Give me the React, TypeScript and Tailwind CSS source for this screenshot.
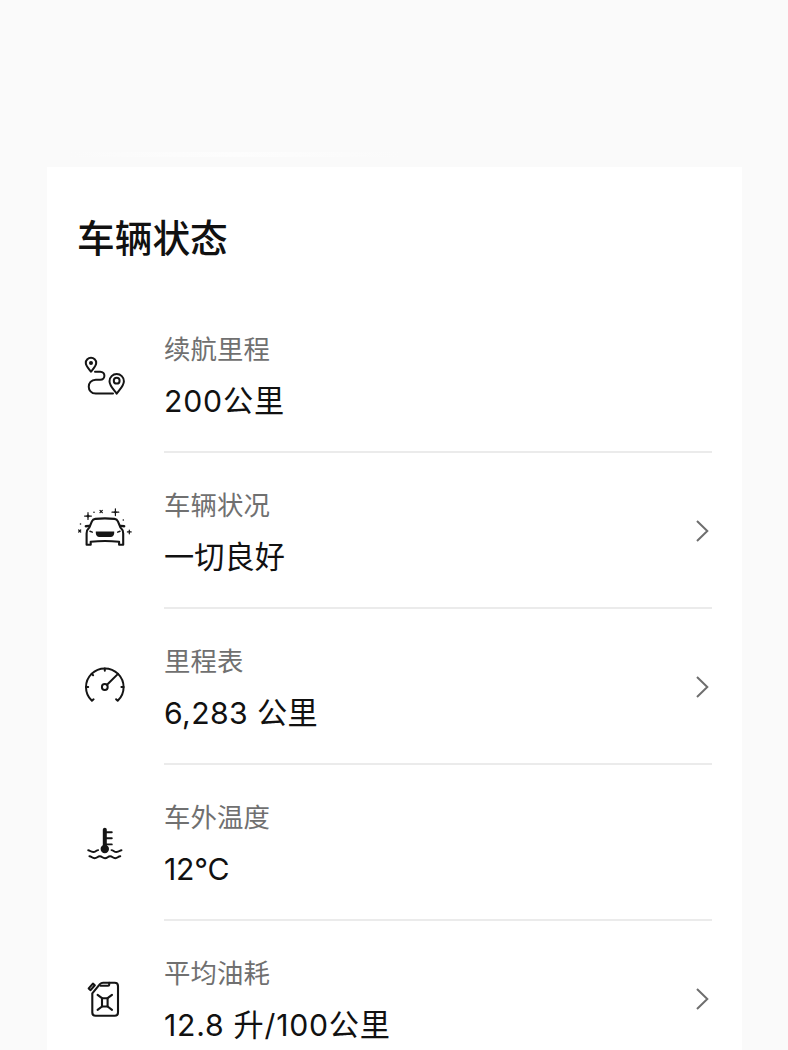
import { ReactNode } from "react";

interface StatusItem {
  label: string;
  value: string;
  icon: ReactNode;
  tracking: string;
  clickable?: boolean;
}

const iconClass = "mt-12 h-[60px] w-[54px] shrink-0 text-[#151515]";

function RouteIcon() {
  return (
    <svg
      viewBox="8 0 54 60"
      className={iconClass}
      fill="none"
      stroke="currentColor"
      strokeWidth="2"
      strokeLinecap="round"
      strokeLinejoin="round"
    >
      <path d="M21 26.800c-2.100-3-5.200-6-5.200-8.900a5.200 5.200 0 0 1 10.400 0c0 2.900-3.100 5.900-5.200 8.900z" />
      <circle cx="21" cy="18" r="2" fill="currentColor" stroke="none" />
      <path d="M46.700 48.700c-2.700-3.900-7.200-7.900-7.200-12.500a7.200 7.200 0 0 1 14.400 0c0 4.600-4.500 8.600-7.200 12.500z" />
      <circle cx="46.700" cy="35.700" r="2.900" />
      <path d="M25 26.700h5.200c5.600 0 5.600 8 0 8h-4.400c-9.400 0-9.400 13.900 0 13.900H43" />
    </svg>
  );
}

function CarIcon() {
  return (
    <svg
      viewBox="8 1 54 60"
      className={iconClass}
      fill="none"
      stroke="currentColor"
      strokeWidth="2.100"
      strokeLinecap="round"
      strokeLinejoin="round"
    >
      <path d="M19.300 27.500l2.600-6.100c.7-1.700 1.700-2.300 3.400-2.500 6.500-.7 12.700-.7 19.200 0 1.700.2 2.700.8 3.400 2.500l2.600 6.100c1.900 1.700 2.700 3.500 2.700 6v11.200h-4.100v-3c-9.300-.9-19.100-.9-28.400 0v3h-4.100V33.500c0-2.500.8-4.300 2.700-6z" />
      <path d="M15.800 26.200l3.500-.3M54.200 26.200l-3.500-.3" strokeWidth="2.400" />
      <path d="M20 31.200l2.300.9M50 31.200l-2.300.9" strokeWidth="1.500" />
      <path
        d="M25.800 31.400h18.400v1.500c0 2.200-1.300 4-3.600 4H29.400c-2.300 0-3.600-1.800-3.600-4z"
        fill="currentColor"
        stroke="none"
      />
      <path
        d="M18 12.700v6.800M14.600 16.100h6.800M45.400 8.800v6.800M42 12.200h6.800M59.300 30v3.800M57.400 31.900h3.800"
        strokeWidth="1.200"
      />
      <path
        d="M18 14q.4 1.700 2.100 2.100-1.700.4-2.100 2.100-.4-1.700-2.100-2.100 1.700-.4 2.100-2.100z M45.400 10.100q.4 1.700 2.100 2.100-1.700.4-2.100 2.100-.4-1.700-2.100-2.100 1.700-.4 2.100-2.100z"
        fill="currentColor"
        stroke="none"
      />
      <path
        d="M30 10.400l2.300 2.300m0-2.300l-2.300 2.300M8.700 30l2 2m0-2l-2 2"
        strokeWidth="1.200"
      />
      <g fill="currentColor" stroke="none">
        <circle cx="24" cy="12.300" r="0.800" />
        <circle cx="10.500" cy="24" r="0.800" />
        <circle cx="53.300" cy="20" r="0.800" />
      </g>
    </svg>
  );
}

function GaugeIcon() {
  return (
    <svg
      viewBox="8 2 54 60"
      className={iconClass}
      fill="none"
      stroke="currentColor"
      strokeWidth="2"
      strokeLinecap="round"
      strokeLinejoin="round"
    >
      <path d="M23.600 44.300l-1.700 1.500C18.300 42.300 16 37.500 16 32.200a18.800 18.800 0 0 1 37.600 0c0 5.300-2.200 10.100-5.900 13.600l-1.600-1.500" />
      <path d="M34.800 13.500v2.200M16 32h2.200M51.400 32h2.200M21.700 18.900l1.400 1.400" />
      <circle cx="34.800" cy="32" r="2.900" />
      <path d="M37 29.800l11-10.900" />
    </svg>
  );
}

function ThermometerIcon() {
  return (
    <svg
      viewBox="8 -2 54 60"
      className={iconClass}
      fill="none"
      stroke="currentColor"
      strokeWidth="1.900"
      strokeLinecap="round"
      strokeLinejoin="round"
    >
      <path d="M34.800 14.700v18" strokeWidth="4" />
      <circle cx="34.800" cy="34" r="4.200" fill="currentColor" stroke="none" />
      <path d="M36 17.200h5.800M36 23.300h5.800M36 29.400h5.800" />
      <path d="M18.200 35.300c2 0 2 1.700 5 1.700 2.600 0 3-1.900 5-1.900M41.500 35.100c2 0 2.300 1.900 5 1.900 2.900 0 3-1.700 5-1.700" />
      <path d="M19.400 41.300c2.500 0 2.500 1.900 5.200 1.900s2.700-1.900 5.200-1.900 2.500 1.900 5.200 1.900 2.600-1.900 5.100-1.900 2.600 1.900 5.200 1.900 2.500-1.900 5-1.900" />
    </svg>
  );
}

function FuelIcon() {
  return (
    <svg
      viewBox="8 -1 54 60"
      className={iconClass}
      fill="none"
      stroke="currentColor"
      strokeWidth="2.100"
      strokeLinecap="round"
      strokeLinejoin="round"
    >
      <path d="M22.300 23.300l7.600-9.200c1-1.100 1.800-1.400 3.200-1.400h11.600c2 0 3.300 1.300 3.300 3.300v26.500c0 2-1.300 3.300-3.300 3.300H25.600c-2 0-3.300-1.300-3.300-3.300z" />
      <path d="M30.500 15.800h7.700q1 0 1-1v-2" />
      <path d="M22.900 13.600l1.900 1.700-4.200 4.800-1.900-1.700z" />
      <path d="M32 28.200h5.600v8.300H32z" />
      <path d="M32 28.200l-4.400-3.400M37.600 28.200l4.400-3.400M32 36.500l-4.400 3.400M37.600 36.500l4.400 3.400" />
    </svg>
  );
}

const items: StatusItem[] = [
  {
    label: "续航里程",
    value: "200公里",
    icon: <RouteIcon />,
    tracking: "tracking-[0.8px]",
  },
  {
    label: "车辆状况",
    value: "一切良好",
    icon: <CarIcon />,
    tracking: "tracking-[0.1px]",
    clickable: true,
  },
  {
    label: "里程表",
    value: "6,283 公里",
    icon: <GaugeIcon />,
    tracking: "tracking-[0.4px]",
    clickable: true,
  },
  {
    label: "车外温度",
    value: "12°C",
    icon: <ThermometerIcon />,
    tracking: "tracking-[-0.2px]",
  },
  {
    label: "平均油耗",
    value: "12.8 升/100公里",
    icon: <FuelIcon />,
    tracking: "tracking-[0.75px]",
    clickable: true,
  },
];

function StatusRow({ label, value, icon, tracking, clickable }: StatusItem) {
  return (
    <div className="flex h-[156px] gap-8">
      {icon}
      <div className="flex flex-1 items-center justify-between border-b-2 border-[#ebebeb]">
        <div className="pt-1">
          <p className="text-[26.4px] leading-9 tracking-[0.1px] text-[#707070]">
            {label}
          </p>
          <p
            className={`mt-[14px] text-[30.2px] leading-10 text-[#111111] ${tracking}`}
          >
            {value}
          </p>
        </div>
        {clickable && (
          <svg
            viewBox="0 0 16 24"
            className="mt-[2px] h-6 w-4 text-[#6e6e6e]"
            fill="none"
            stroke="currentColor"
            strokeWidth="2"
          >
            <path d="M1 2l10.300 10L1 22" />
          </svg>
        )}
      </div>
    </div>
  );
}

export default function App() {
  return (
    <div className="h-[1050px] overflow-hidden bg-[#fafafa] px-[47px] pt-[152px] font-[Inter,'Noto_Sans_CJK_SC',sans-serif]">
      <div className="mb-[10px] ml-5 h-[5px] w-[335px] bg-linear-to-r from-[#fafafa] via-[#fdfdfd] to-[#fafafa]" />
      <div className="h-[960px] w-[695px] bg-white pl-[31px] pr-[30px] pt-[43px]">
        <h1 className="mb-[31px] -ml-px text-[37.700px] font-medium leading-[56px] text-[#111111]">
          车辆状态
        </h1>
        {items.map((item) => (
          <StatusRow key={item.label} {...item} />
        ))}
      </div>
    </div>
  );
}
